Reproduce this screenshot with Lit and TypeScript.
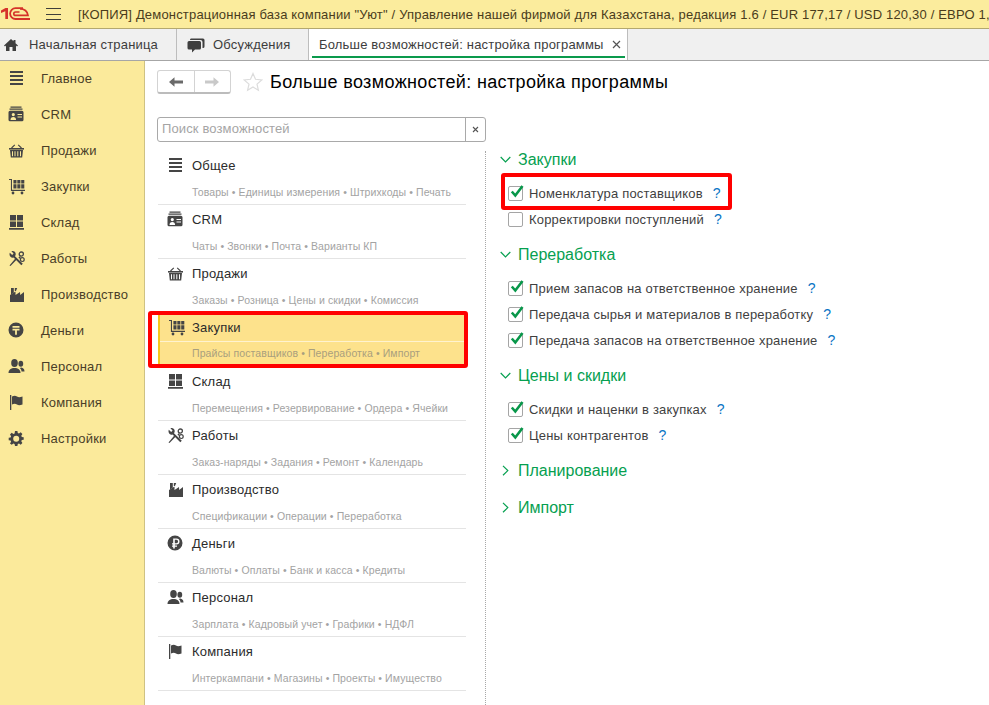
import { LitElement, html, css, svg } from "lit";
import { customElement } from "lit/decorators.js";

const icons: Record<string, unknown> = {
  main: svg`<path d="M3 2h13v2H3zM3 6h13v2H3zM3 10h13v2H3zM3 14h13v2H3z"/>`,
  crm: svg`<path d="M3.500 1.500h11v1.200h-11zM2.500 3.600h13v1.200h-13z"/><path fill-rule="evenodd" d="M3 5.800h12a1.500 1.500 0 0 1 1.500 1.500v7.500a1.500 1.500 0 0 1-1.500 1.500H3a1.500 1.500 0 0 1-1.500-1.500V7.300A1.500 1.500 0 0 1 3 5.800zM6.300 8a1.600 1.600 0 1 0 0 3.200 1.600 1.600 0 0 0 0-3.200zM3.500 15h5.600c0-1.900-1-2.900-2.800-2.900S3.500 13.100 3.500 15zM10.500 9v1H15V9zM10.500 11.500v1H15v-1z"/>`,
  sales: svg`<path d="M2 7h15v1.600H2z"/><path fill-rule="evenodd" d="M3 9h13l-.8 7.500H3.800zM5 10.200v5h1v-5zM7.500 10.200v5h1v-5zM10.300 10.200v5h1v-5zM13 10.200v5h1v-5z"/><path d="M4.500 7 7.800 3.800M14.500 7 11.200 3.800" stroke="currentColor" stroke-width="1.100" fill="none"/>`,
  buy: svg`<path d="M2 2h3v10.800h13V14H3.900V3.100H2z"/><path d="M6.400 3h3.100v3.400H6.400zM10.300 3h3.100v3.400h-3.100zM14.200 3h3.100v3.400h-3.100zM6.400 7.300h3.100v4.200H6.400zM10.300 7.300h3.100v4.200h-3.100zM14.200 7.300h3.100v4.200h-3.100z"/><circle cx="6" cy="16" r="1.400"/><circle cx="15" cy="16" r="1.400"/>`,
  stock: svg`<path d="M3 2h6v5.500H3zM10 2h6v5.500h-6zM3 8.500h6V14H3zM10 8.500h6V14h-6zM2 15h15v1.800H2z"/>`,
  work: svg`<path d="M2.800 3.800 5.200 6l1.400-1.400-2.200-2.300C6.500 1.400 9 3 8.700 5.500c-.1.800-.5 1.500-.7 1.800l7.800 7.400-1.500 1.500-7.700-7.600C4.500 9.500 1.600 7 2.800 3.800z"/><path d="M9.800 10.500 3.500 16.900l-1-.4 6-7.300zM11.400 8.700l1.500-1.800 1 1-1.400 1.800z"/><circle cx="14.300" cy="5.100" r="2.100" fill="none" stroke="currentColor" stroke-width="1.300"/><circle cx="15.300" cy="10.600" r="1.900" fill="none" stroke="currentColor" stroke-width="1.200"/>`,
  prod: svg`<path d="M3 10 8.500 6.500v3.500l4.500-3 .2 3 3.800-3V17H3z"/><path d="M4 3h2.800v4.800L4 9.600zM7.800 3h2.400L9 6H7.800z"/>`,
  money: svg`<path fill-rule="evenodd" d="M9 1.500a7.500 7.500 0 1 1 0 15 7.500 7.500 0 0 1 0-15zM5.500 5v1.700h7V5zM5.500 7.700v1.700h2.600v4.400h1.800V9.400h2.600V7.700z"/>`,
  rub: svg`<path fill-rule="evenodd" d="M9 1.500a7.500 7.500 0 1 1 0 15 7.500 7.500 0 0 1 0-15zM7.200 4.500v4.700H6v1.300h1.200v1H6v1.300h1.200v1.700h1.600v-1.700H11v-1.300H8.800v-1h1.700a3 3 0 0 0 0-6zM8.800 5.800h1.600a1.700 1.700 0 0 1 0 3.400H8.800z"/>`,
  staff: svg`<ellipse cx="7.500" cy="6" rx="3.300" ry="4"/><path d="M1.500 16c0-3.500 2.500-5 6-5s6 1.500 6 5z"/><ellipse cx="13.800" cy="6.800" rx="2.400" ry="3"/><path d="M14.300 10.500c1.900.3 3.200 1.500 3.200 4h-3c0-1.700-.7-2.800-1.700-3.600z"/>`,
  org: svg`<path d="M3 2h1.300v15H3zM5 3.500c2-1 3.500-1 5 0s3 .8 5.500 0v8c-2.500.8-4 1-5.500 0s-3-1-5 0z"/>`,
  gear: svg`<path fill-rule="evenodd" d="M8 2h2.400l.4 1.900 1.200.5 1.700-1.100 1.700 1.700-1.100 1.700.5 1.200 1.900.4v2.400l-1.900.4-.5 1.200 1.100 1.700-1.700 1.700-1.700-1.100-1.200.5-.4 1.900H8l-.4-1.900-1.200-.5-1.700 1.100L3 14.500l1.100-1.700-.5-1.200-1.900-.4V8.800l1.900-.4.5-1.200L3 5.500l1.700-1.700 1.700 1.100 1.200-.5zM9.200 6.800a3 3 0 1 0 0 6 3 3 0 0 0 0-6z"/>`,
};

const nav = [
  ["main", "Главное"], ["crm", "CRM"], ["sales", "Продажи"], ["buy", "Закупки"], ["stock", "Склад"],
  ["work", "Работы"], ["prod", "Производство"], ["money", "Деньги"], ["staff", "Персонал"], ["org", "Компания"], ["gear", "Настройки"],
];

const sections = [
  ["main", "Общее", "Товары • Единицы измерения • Штрихкоды • Печать"],
  ["crm", "CRM", "Чаты • Звонки • Почта • Варианты КП"],
  ["sales", "Продажи", "Заказы • Розница • Цены и скидки • Комиссия"],
  ["buy", "Закупки", "Прайсы поставщиков • Переработка • Импорт"],
  ["stock", "Склад", "Перемещения • Резервирование • Ордера • Ячейки"],
  ["work", "Работы", "Заказ-наряды • Задания • Ремонт • Календарь"],
  ["prod", "Производство", "Спецификации • Операции • Переработка"],
  ["rub", "Деньги", "Валюты • Оплаты • Банк и касса • Кредиты"],
  ["staff", "Персонал", "Зарплата • Кадровый учет • Графики • НДФЛ"],
  ["org", "Компания", "Интеркампани • Магазины • Проекты • Имущество"],
];

type Opt = { t: string; on: boolean; mark?: boolean };
const groups: { t: string; open: boolean; opts: Opt[] }[] = [
  { t: "Закупки", open: true, opts: [
    { t: "Номенклатура поставщиков", on: true, mark: true },
    { t: "Корректировки поступлений", on: false },
  ] },
  { t: "Переработка", open: true, opts: [
    { t: "Прием запасов на ответственное хранение", on: true },
    { t: "Передача сырья и материалов в переработку", on: true },
    { t: "Передача запасов на ответственное хранение", on: true },
  ] },
  { t: "Цены и скидки", open: true, opts: [
    { t: "Скидки и наценки в закупках", on: true },
    { t: "Цены контрагентов", on: true },
  ] },
  { t: "Планирование", open: false, opts: [] },
  { t: "Импорт", open: false, opts: [] },
];

const icon = (k: string) => html`<svg class="ico" viewBox="0 0 18 18" width="18" height="18" fill="currentColor">${icons[k]}</svg>`;

@customElement("app-root")
export class AppRoot extends LitElement {
  static styles = css`
    :host { display: block; width: 989px; height: 705px; overflow: hidden; background: #fff;
      font-family: "Liberation Sans", Arial, sans-serif; font-size: 13px; color: #333; }
    .shell { display: flex; flex-direction: column; height: 705px; }
    .title { height: 29px; box-sizing: border-box; flex: none; display: flex; align-items: center; background: #fbec9d;
      border-bottom: 1px solid #b3a86f; white-space: nowrap; overflow: hidden; }
    .logo { width: 31px; height: 14px; flex: none; }
    .burger { width: 15px; height: 12px; margin-left: 15px; flex: none; border-top: 1px solid #3f3f3a; border-bottom: 1px solid #3f3f3a; box-sizing: border-box; display: flex; align-items: center; }
    .burger i { display: block; width: 100%; height: 1px; background: #3f3f3a; }
    .title span { margin-left: 17px; font-size: 13px; letter-spacing: .18px; color: #4a3c1c; }
    .tabs { height: 32px; box-sizing: border-box; flex: none; display: flex; background: #f0f0f0; border-bottom: 1px solid #a6a6a6; }
    .tab { display: flex; align-items: center; border-right: 1px solid #bdbdbd; font-size: 13px; color: #3d3d3d; letter-spacing: .18px; box-sizing: border-box; white-space: nowrap; }
    .tab.home { width: 177px; padding-left: 3px; gap: 10px; }
    .tab.talk { width: 132px; padding-left: 10px; gap: 8px; }
    .tab.active { width: 319px; background: #fff; padding-left: 10px; position: relative; }
    .tab.active::after { content: ""; position: absolute; left: 3px; right: 2px; bottom: 2px; height: 2px; background: #0a9a4c; }
    .tab .x { margin-left: 8px; width: 9px; height: 9px; flex: none; }
    .body { flex: 1; display: flex; min-height: 0; }
    .side { width: 144px; flex: none; background: #fbea9b; border-right: 1px solid #cfc283; }
    .side a { height: 36px; display: flex; align-items: center; padding: 0 0 2px 7px; gap: 16px; color: #4a3e28; font-size: 13px; letter-spacing: .2px; box-sizing: border-box; }
    .side .ico { color: #454545; flex: none; }
    .main { flex: 1; min-width: 0; display: flex; flex-direction: column; padding: 9px 0 0 12px; }
    .head { display: flex; align-items: center; height: 24px; }
    .nav { display: flex; width: 74px; height: 24px; border: 1px solid #d3d3d3; border-bottom: 2px solid #bcbcbc; border-radius: 3px; box-sizing: border-box; flex: none; }
    .nav div { flex: 1; display: flex; align-items: center; justify-content: center; }
    .nav div + div { border-left: 1px solid #d3d3d3; }
    .star { margin-left: 12px; flex: none; }
    h1 { margin: 0 0 0 7px; font-size: 18px; font-weight: 400; color: #000; letter-spacing: .355px; white-space: nowrap; }
    .cols { flex: 1; display: flex; min-height: 0; margin-top: 23px; }
    .left { width: 329px; flex: none; }
    .search { display: flex; height: 25px; border: 1px solid #a9a9a9; border-radius: 3px; box-sizing: border-box; }
    .search div { flex: 1; padding-left: 4px; color: #a5a5a5; font-size: 13px; letter-spacing: .13px; line-height: 22px; }
    .search b { width: 20px; box-sizing: border-box; border-left: 1px solid #a9a9a9; display: flex; align-items: center; justify-content: center; flex: none; }
    .list { width: 308px; margin: 9px 0 0 1px; }
    .item { height: 54px; box-sizing: border-box; border-bottom: 1px solid #e4e4e4; display: grid; grid-template-columns: 34px 1fr; grid-template-rows: 28px 25px; position: relative; }
    .item .ico { align-self: center; justify-self: center; margin-left: -1px; color: #454545; }
    .item .name { font-size: 13px; color: #2b2b2b; align-self: center; letter-spacing: .2px; }
    .item .sub { grid-column: 2; font-size: 10.5px; color: #a3a3a3; align-self: center; letter-spacing: .1px; white-space: nowrap; }
    .item.sel { background: #fde28c; border-bottom-color: #fde28c; border-left: 2px solid #f7c61a; grid-template-columns: 32px 1fr; height: 52px; margin: 0 0 2px; grid-template-rows: 28px 24px; }
    .item.sel::before { content: ""; position: absolute; left: 0; right: 0; top: 28px; height: 1px; background: #fff3cf; }
    .item.sel .sub { color: #a99f7e; }
    .mark { position: absolute; border: 4px solid #f00; border-radius: 3px; box-sizing: border-box; pointer-events: none; }
    .mark.m1 { left: -12px; top: -2px; width: 320px; height: 57px; }
    .mark.m2 { left: -7px; top: -7px; width: 231px; height: 37px; }
    .right { flex: 1; min-width: 0; border-left: 1px dotted #a8a8a8; margin: 34px 0 0 -1px; padding: 0 0 0 14px; }
    .gh { display: flex; align-items: center; height: 17px; color: #06a050; font-size: 16px; gap: 7px; }
    .g { margin-bottom: 14px; }
    .g.closed { margin-bottom: 20px; }
    .opts { display: flex; flex-direction: column; padding: 12px 0 0 8px; }
    .opt { height: 26px; display: flex; align-items: center; position: relative; color: #3f3f3f; font-size: 13px; letter-spacing: .18px; white-space: nowrap; }
    .box { width: 15px; height: 15px; border: 1px solid #a5a5a5; border-radius: 2px; box-sizing: border-box; margin-right: 6px; flex: none; position: relative; background: #fff; }
    .box svg { position: absolute; left: 0; top: -3px; }
    .q { color: #0a74c4; margin-left: 10px; font-size: 14px; }
  `;

  render() {
    return html`<div class="shell">
      <div class="title">
        <svg class="logo" viewBox="0 0 31 14" aria-hidden="true">
          <path d="M1 3.500 5.500 1H8v11H5.300V4.300L1 6z" fill="#d5322a"/>
          <path d="M23 1.200h-7.500a5.400 5.400 0 0 0 0 10.800H30" fill="none" stroke="#d5322a" stroke-width="1.800"/>
          <path d="M19.500 5h-4a1.600 1.600 0 0 0 0 3.400H28c-.6-3.500-3-6.500-8-6.500" fill="none" stroke="#d5322a" stroke-width="1.700"/>
        </svg>
        <div class="burger"><i></i></div>
        <span>[КОПИЯ] Демонстрационная база компании "Уют" / Управление нашей фирмой для Казахстана, редакция 1.6 / EUR 177,17 / USD 120,30 / ЕВРО 1,00</span>
      </div>
      <div class="tabs">
        <div class="tab home">
          <svg width="16" height="16" viewBox="0 0 16 16" fill="#3f3f3f"><path d="M8 2 1 8.500l1 1L3 8.600V14h3.500v-4h3v4H13V8.600l1 .9 1-1L12.500 6.200V3h-2v1.300z"/></svg>
          Начальная страница
        </div>
        <div class="tab talk">
          <svg width="18" height="16" viewBox="0 0 18 16" fill="#3f3f3f"><path d="M4 1.500h12a1.500 1.500 0 0 1 1.500 1.500v6.500a1.500 1.500 0 0 1-1.500 1.500h-.5V5a2 2 0 0 0-2-2H3a1.500 1.500 0 0 1 1-1.500z"/><path d="M2 4h10.500A1.500 1.500 0 0 1 14 5.500V11a1.500 1.500 0 0 1-1.500 1.500H8L5 15.500v-3H2A1.500 1.500 0 0 1 .5 11V5.500A1.500 1.500 0 0 1 2 4z"/></svg>
          Обсуждения
        </div>
        <div class="tab active">
          Больше возможностей: настройка программы
          <svg class="x" viewBox="0 0 9 9"><path d="M1 1l7 7M8 1 1 8" stroke="#555" stroke-width="1.200"/></svg>
        </div>
      </div>
      <div class="body">
        <div class="side">
          ${nav.map(([k, t]) => html`<a>${icon(k)}${t}</a>`)}
        </div>
        <div class="main">
          <div class="head">
            <div class="nav">
              <div><svg width="16" height="12" viewBox="0 0 16 12" fill="#6a6a6a"><path d="M1 6 6.500 1.200V4.500H15v3H6.500v3.300z"/></svg></div>
              <div><svg width="16" height="12" viewBox="0 0 16 12" fill="#c9c9c9"><path d="M15 6 9.500 1.200V4.500H1v3h8.500v3.300z"/></svg></div>
            </div>
            <svg class="star" width="20" height="20" viewBox="0 0 20 20" fill="none" stroke="#dcdcdc" stroke-width="1.200"><path d="M10 1.500l2.500 5.800 6.300.6-4.800 4.200 1.400 6.200L10 15l-5.400 3.300L6 12.100 1.200 7.900l6.300-.6z"/></svg>
            <h1>Больше возможностей: настройка программы</h1>
          </div>
          <div class="cols">
            <div class="left">
              <div class="search">
                <div>Поиск возможностей</div>
                <b><svg width="7" height="7" viewBox="0 0 7 7"><path d="M1 1l5 5M6 1 1 6" stroke="#555" stroke-width="1.100"/></svg></b>
              </div>
              <div class="list">
                ${sections.map(([k, t, s]) => html`<div class="item ${t === "Закупки" ? "sel" : ""}">
                  ${icon(k)}
                  <div class="name">${t}</div>
                  <div class="sub">${s}</div>
                  ${t === "Закупки" ? html`<div class="mark m1"></div>` : ""}
                </div>`)}
              </div>
            </div>
            <div class="right">
              ${groups.map((g) => html`<div class="g ${g.open ? "" : "closed"}">
                <div class="gh">
                  ${g.open
                    ? html`<svg width="11" height="7" viewBox="0 0 11 7" fill="none" stroke="#06a050" stroke-width="1.200"><path d="M.7 1l4.800 4.800L10.300 1"/></svg>`
                    : html`<svg width="11" height="11" viewBox="0 0 11 11" fill="none" stroke="#06a050" stroke-width="1.200"><path d="M3 .8l4.800 4.800L3 10.300"/></svg>`}
                  ${g.t}
                </div>
                ${g.opts.length ? html`<div class="opts">
                  ${g.opts.map((o) => html`<div class="opt">
                    <div class="box">${o.on ? html`<svg width="16" height="16" viewBox="0 0 16 16" fill="none" stroke="#08974a" stroke-width="2.600"><path d="M2.800 7.500l3.500 4L13.500 2"/></svg>` : ""}</div>
                    ${o.t}<span class="q">?</span>
                    ${o.mark ? html`<div class="mark m2"></div>` : ""}
                  </div>`)}
                </div>` : ""}
              </div>`)}
            </div>
          </div>
        </div>
      </div>
    </div>`;
  }
}
